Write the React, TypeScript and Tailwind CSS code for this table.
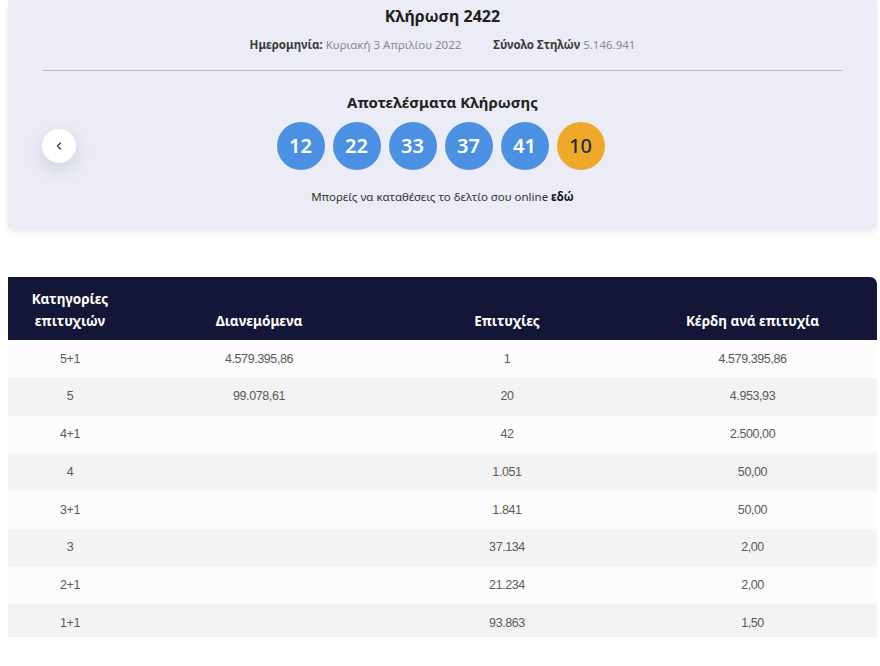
import { ChevronLeft } from 'lucide-react';

const balls = [
  { n: 12, gold: false },
  { n: 22, gold: false },
  { n: 33, gold: false },
  { n: 37, gold: false },
  { n: 41, gold: false },
  { n: 10, gold: true },
];

const rows = [
  ['5+1', '4.579.395,86', '1', '4.579.395,86'],
  ['5', '99.078,61', '20', '4.953,93'],
  ['4+1', '', '42', '2.500,00'],
  ['4', '', '1.051', '50,00'],
  ['3+1', '', '1.841', '50,00'],
  ['3', '', '37.134', '2,00'],
  ['2+1', '', '21.234', '2,00'],
  ['1+1', '', '93.863', '1,50'],
];

const cols = ['w-[124px]', 'w-[254px]', 'w-[242px]', 'w-[249px]'];

export default function App() {
  return (
    <div className="w-[880px] h-[666px] bg-white overflow-hidden font-['Noto_Sans',sans-serif]">
      {/* Draw panel */}
      <div className="ml-[8px] w-[869px] h-[228px] bg-[#ebecf5] shadow-[0_4px_6px_rgba(0,0,0,0.08)] flex flex-col items-center pt-[4px]">
        <h1 className="text-[16px] font-bold text-[#1e1e1e] leading-[24px]">Κλήρωση 2422</h1>
        <div className="mt-[9px] flex gap-[32px] text-[11.5px] leading-[16px]">
          <span>
            <b className="text-[#3c3c3c]">Ημερομηνία:</b>{' '}
            <span className="text-[#8a8a8a]">Κυριακή 3 Απριλίου 2022</span>
          </span>
          <span>
            <b className="text-[#3c3c3c]">Σύνολο Στηλών</b>{' '}
            <span className="text-[#8a8a8a]">5.146.941</span>
          </span>
        </div>
        <div className="mt-[17px] w-[799px] h-px bg-[#b9b9bf]" />
        <div className="relative w-full flex flex-col items-center">
          <button className="absolute left-[34px] top-[58px] w-[34px] h-[34px] rounded-full bg-white shadow-[0_6px_16px_rgba(40,50,90,0.15)] flex items-center justify-center text-[#333]">
            <ChevronLeft className="w-[12px] h-[12px]" strokeWidth={2.5} />
          </button>
          <h2 className="mt-[20px] text-[15px] font-bold text-[#222] leading-[22px]">Αποτελέσματα Κλήρωσης</h2>
          <div className="mt-[9px] flex gap-[8px] -ml-[4px]">
            {balls.map((b) => (
              <div
                key={b.n}
                className={
                  b.gold
                    ? 'w-[48px] h-[48px] rounded-full bg-[#efa92a] text-[#2a2a2a] flex items-center justify-center text-[20px] font-medium'
                    : 'w-[48px] h-[48px] rounded-full bg-[#4b90e2] text-white flex items-center justify-center text-[20px] font-semibold'
                }
              >
                {b.n}
              </div>
            ))}
          </div>
          <p className="mt-[19px] text-[11.5px] text-[#333] leading-[16px]">
            Μπορείς να καταθέσεις το δελτίο σου online <b className="text-[#111]">εδώ</b>
          </p>
        </div>
      </div>

      {/* Results table */}
      <div className="ml-[8px] mt-[49px] w-[869px] h-[360px] overflow-hidden">
        <div className="flex h-[63px] bg-[#141638] rounded-tr-[7px] text-white font-bold text-[13.5px] leading-[22px]">
          <div className={`${cols[0]} flex items-end justify-center pb-[8px] text-center`}>
            Κατηγορίες<br />επιτυχιών
          </div>
          <div className={`${cols[1]} flex items-end justify-center pb-[8px]`}>Διανεμόμενα</div>
          <div className={`${cols[2]} flex items-end justify-center pb-[8px]`}>Επιτυχίες</div>
          <div className={`${cols[3]} flex items-end justify-center pb-[8px]`}>Κέρδη ανά επιτυχία</div>
        </div>
        {rows.map((r, i) => (
          <div
            key={r[0]}
            className={`flex h-[37.75px] items-center text-[12.5px] text-[#5a5a5a] tracking-[-0.4px] font-['Liberation_Sans_Narrow','Liberation_Sans',sans-serif] ${
              i % 2 === 0 ? 'bg-[#fcfcfc]' : 'bg-[#f3f3f4]'
            }`}
          >
            {r.map((c, j) => (
              <div key={j} className={`${cols[j]} text-center`}>
                {c}
              </div>
            ))}
          </div>
        ))}
      </div>
    </div>
  );
}
